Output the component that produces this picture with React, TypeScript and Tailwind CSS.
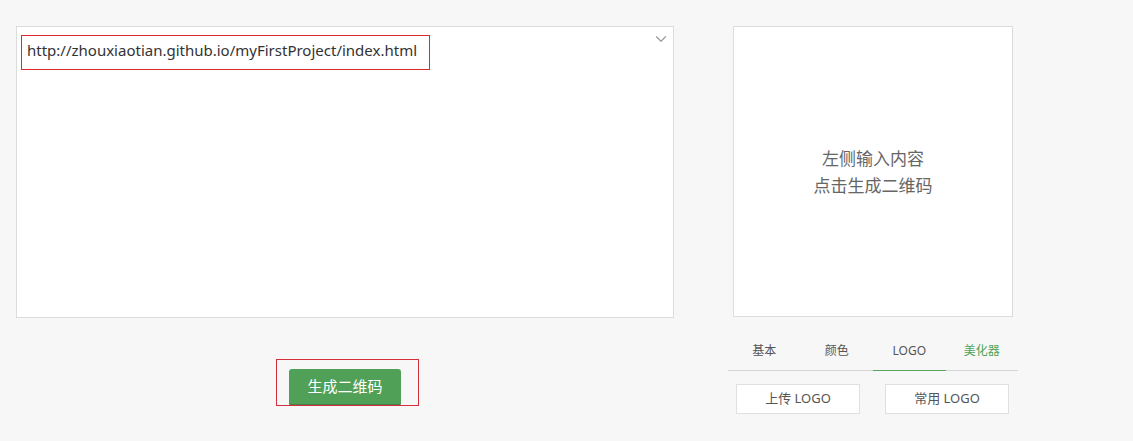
import { ChevronDown } from 'lucide-react';

const font = { fontFamily: '"Noto Sans", "Noto Sans CJK SC", sans-serif' };

export default function App() {
  return (
    <div className="w-full h-[441px] bg-[#f7f7f7] flex pt-[26px] pl-[16px] text-[#333]" style={font}>
      <div className="w-[658px] flex flex-col">
        <div className="h-[292px] bg-white border border-[#dcdcdc] relative pt-[8px] pl-[4px]">
          <div className="relative w-[409px] h-[35px] pt-[4px] pl-[6px] text-[15px] leading-[22px] text-[#333]">
            http://zhouxiaotian.github.io/myFirstProject/index.html
            <div className="absolute inset-0 border border-solid border-[#e0282f] pointer-events-none" />
          </div>
          <ChevronDown size={18} strokeWidth={1.5} className="absolute right-[3px] top-[3px] text-[#999]" />
        </div>
        <div className="flex justify-center mt-[41px] pl-[5px]">
          <div className="relative pt-[10px] pl-[13px] pr-[18px] w-[143px] h-[47px]">
            <button
              type="button"
              className="w-[112px] h-[37px] rounded-[3px] bg-[#51a057] border-b-2 border-[#4a7d4d] text-white text-[15px] flex items-center justify-center"
            >
              生成二维码
            </button>
            <div className="absolute left-0 top-0 w-[143px] h-[47px] border border-solid border-[#d42f3a] pointer-events-none" />
          </div>
        </div>
      </div>
      <div className="w-[290px] ml-[54px] flex flex-col">
        <div className="mx-[5px] h-[291px] bg-white border border-[#dcdcdc] flex flex-col items-center justify-center text-[17px] leading-[27px] text-[#666]">
          <p>左侧输入内容</p>
          <p>点击生成二维码</p>
        </div>
        <div className="mt-[15px] h-[39px] flex border-b border-[#d5d5d5] text-[12px]">
          <div className="flex-1 flex items-center justify-center text-[#555]">基本</div>
          <div className="flex-1 flex items-center justify-center text-[#555]">颜色</div>
          <div className="flex-1 flex items-center justify-center text-[#555] border-b border-[#5aa55e] -mb-px">LOGO</div>
          <div className="flex-1 flex items-center justify-center text-[#4fa355]">美化器</div>
        </div>
        <div className="mt-[13px] pl-[8px] flex gap-[25px]">
          <button type="button" className="w-[124px] h-[30px] bg-white border border-[#e0e0e0] text-[13px] text-[#555]">
            上传 LOGO
          </button>
          <button type="button" className="w-[124px] h-[30px] bg-white border border-[#e0e0e0] text-[13px] text-[#555]">
            常用 LOGO
          </button>
        </div>
      </div>
    </div>
  );
}
